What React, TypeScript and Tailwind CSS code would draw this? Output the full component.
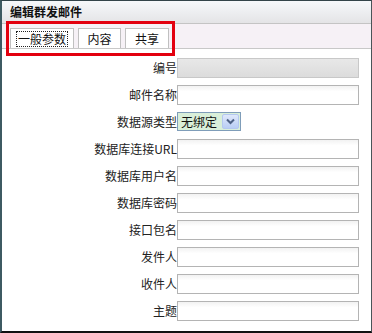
import React from 'react';

const fields = [
  { label: '邮件名称' },
  { label: '数据源类型', select: true },
  { label: '数据库连接URL' },
  { label: '数据库用户名' },
  { label: '数据库密码' },
  { label: '接口包名' },
  { label: '发件人' },
  { label: '收件人' },
  { label: '主题' },
];

function Row({ label, children }: { label: string; children: React.ReactNode }) {
  return (
    <div className="flex items-center h-[27px]">
      <div className="w-[174px] text-right text-[12px] leading-none text-[#222] whitespace-nowrap">{label}</div>
      {children}
    </div>
  );
}

export default function App() {
  return (
    <div
      className="relative w-[372px] h-[333px] bg-white border-t border-r border-l-2 border-b-2 border-t-[#33444a] border-r-[#4a5458] border-l-[#3d5a62] border-b-[#111] overflow-hidden"
      style={{ fontFamily: '"Noto Sans CJK SC", "Liberation Sans", sans-serif' }}
    >
      {/* title */}
      <div className="h-[23px] flex items-center pl-[8px] bg-gradient-to-b from-[#f6f8fb] to-[#e4e4e6] border-b border-[#c4c4c4]">
        <span className="text-[12px] font-bold text-[#111] leading-none">编辑群发邮件</span>
      </div>

      {/* tabs */}
      <div className="h-[25px] flex items-end pl-[8px] gap-[4px] bg-[#f6f1f6] border-b border-[#c8c8c8]">
        <div className="h-[20px] w-[64px] flex items-center justify-center bg-white border border-b-0 border-[#c0c0c0]">
          <span className="text-[12px] leading-none text-[#111] outline outline-1 outline-dotted outline-[#222] px-[1px] py-[1px]">一般参数</span>
        </div>
        <div className="h-[20px] w-[43px] flex items-center justify-center bg-white border border-b-0 border-[#c0c0c0]">
          <span className="text-[12px] leading-none text-[#111]">内容</span>
        </div>
        <div className="h-[20px] w-[44px] flex items-center justify-center bg-white border border-b-0 border-[#c0c0c0]">
          <span className="text-[12px] leading-none text-[#111]">共享</span>
        </div>
      </div>

      {/* red annotation */}
      <div className="absolute left-[4px] top-[20px] w-[169px] h-[35px] border-[3px] border-[#e3000f]" />

      {/* form */}
      <div className="pt-[5px] pl-[1px]">
        <Row label="编号">
          <div className="w-[182px] h-[20px] border border-[#c8c8c8] bg-gradient-to-b from-[#e8e8e8] to-[#dcdcdc]" />
        </Row>
        {fields.map((f) =>
          f.select ? (
            <Row key={f.label} label={f.label}>
              <div className="h-[19px] flex items-stretch border border-[#7f9db9] bg-[#d9efd9]">
                <span className="px-[3px] text-[12px] leading-[17px] text-[#111]">无绑定</span>
                <div className="w-[17px] m-[1px] ml-[2px] rounded-[2px] bg-gradient-to-b from-[#dfe8fb] to-[#b9cdf5] border border-[#b4c8f0] flex items-center justify-center">
                  <svg width="9" height="7" viewBox="0 0 9 7">
                    <path d="M1 1.5 L4.5 5 L8 1.5" fill="none" stroke="#4d6185" strokeWidth="2" />
                  </svg>
                </div>
              </div>
            </Row>
          ) : (
            <Row key={f.label} label={f.label}>
              <div className="w-[182px] h-[20px] border border-[#b4b4b4] bg-gradient-to-b from-[#f2f2f2] to-white to-[30%]" />
            </Row>
          )
        )}
      </div>
    </div>
  );
}
